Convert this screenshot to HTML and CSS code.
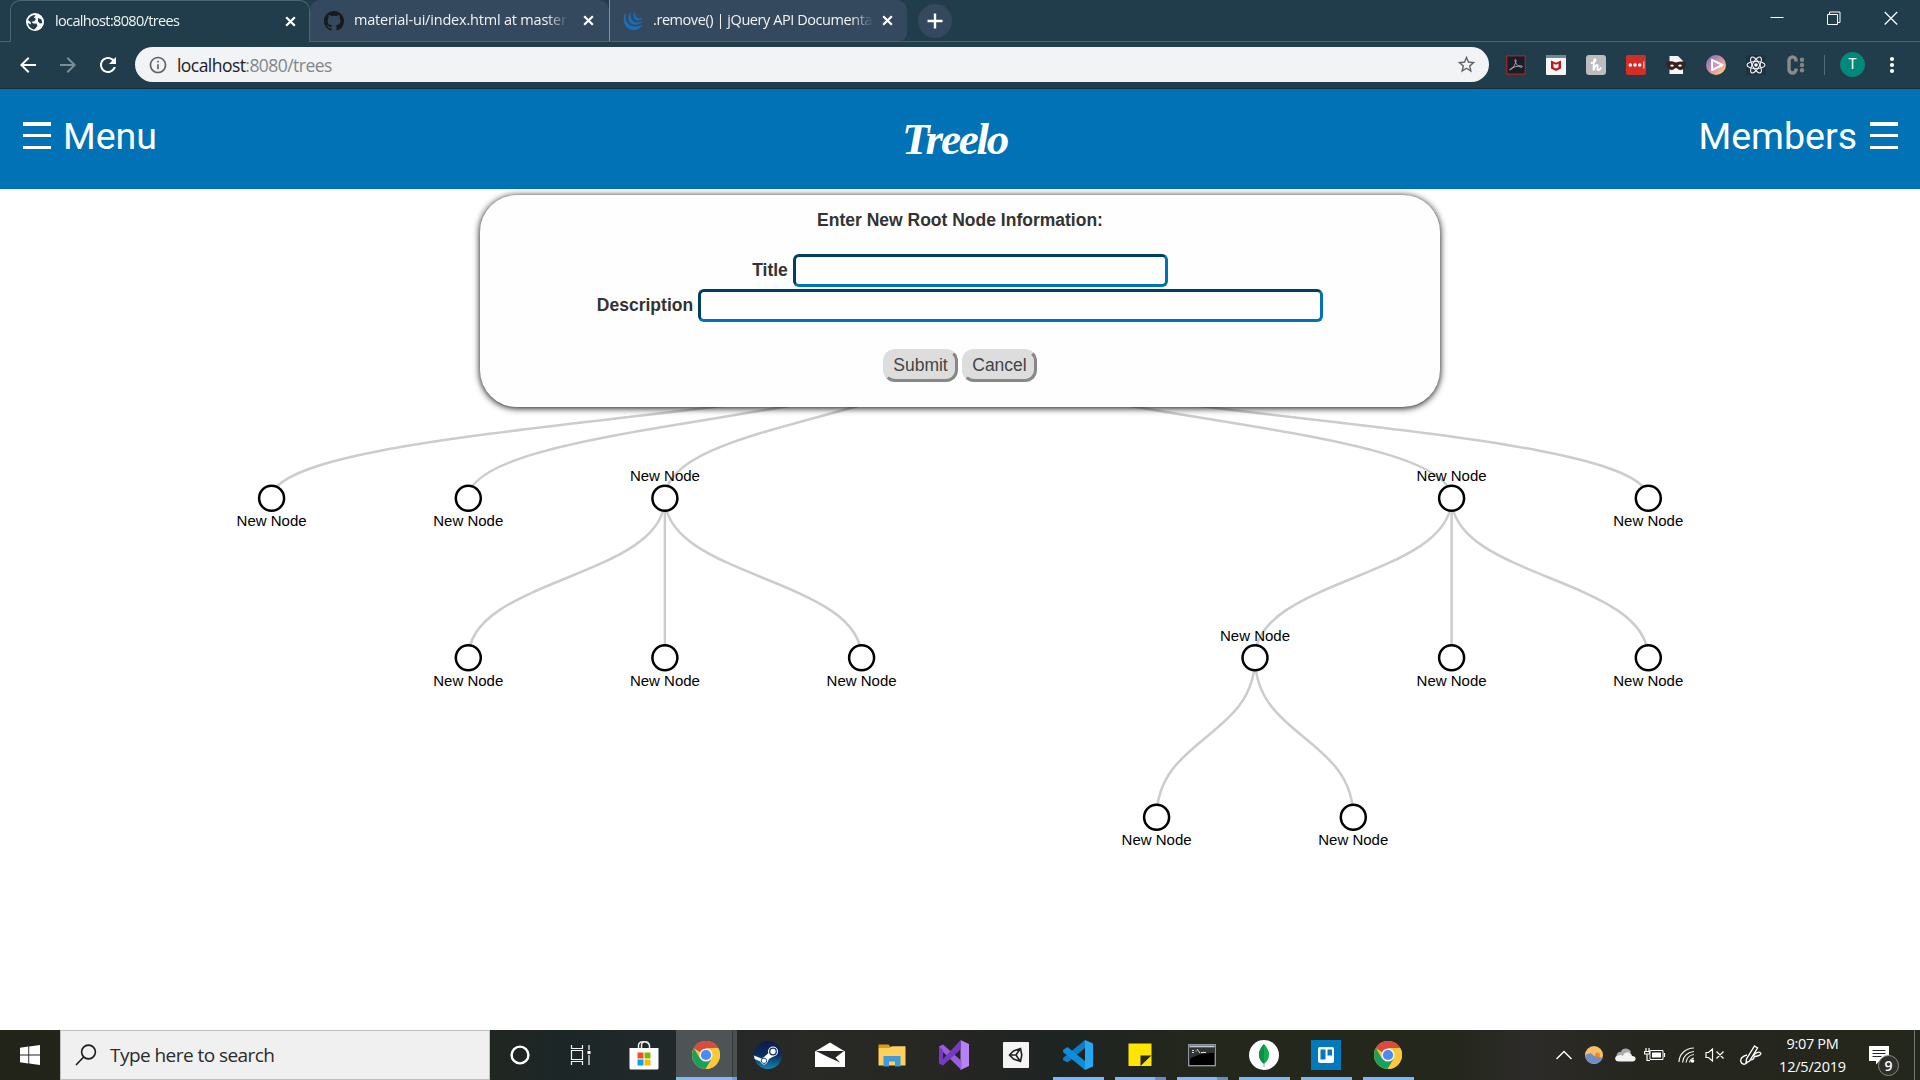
FILE: index.html
```html
<!DOCTYPE html>
<html lang="en">
<head>
<meta charset="utf-8">
<title>localhost:8080/trees</title>
<link rel="stylesheet" href="styles.css">
</head>
<body>
<svg class="defs" width="0" height="0" aria-hidden="true">
  <defs>
    <symbol id="close" viewBox="0 0 12 12"><path d="M2 2l8 8M10 2l-8 8" fill="none" stroke="#fff" stroke-width="2"/></symbol>
    <symbol id="chrome" viewBox="0 0 28 28">
      <circle cx="14" cy="14" r="14" fill="#fcc83c"/>
      <path d="M14 14L1.900 7A14 14 0 0 1 26.100 7z" fill="#db4a3f"/>
      <path d="M14 7h12.100A14 14 0 0 0 1.900 7l6 4z" fill="#db4a3f"/>
      <path d="M1.900 7A14 14 0 0 0 13.600 28l6.400-10.500L8 17.600z" fill="#1a9f5d"/>
      <path d="M26.100 7H14l6 10.500L13.600 28A14 14 0 0 0 26.100 7z" fill="#fcc83c"/>
      <circle cx="14" cy="14" r="6.600" fill="#f1f1f1"/>
      <circle cx="14" cy="14" r="5.100" fill="#4a8af4"/>
    </symbol>
  </defs>
</svg>

<div class="tabstrip">
  <div class="tab tab-active">
    <svg class="favicon" viewBox="0 0 18 18"><circle cx="9" cy="9" r="9" fill="#fff"/><path d="M2 7c1.500-3.500 4-5 7.500-5L8 4.500 10 6 8 8.500H5.500L7 10.500h3.500l1 2.500-3 3.500C5 16 2 13 2 10l3 1.500L4.500 9zM12 5l3.500 1.500.8 3.500-2.300.5-2-2z" fill="#213c4a"/></svg>
    <span class="tab-title title-one">localhost:8080/trees</span>
    <svg class="tab-close"><use href="#close"/></svg>
  </div>
  <div class="tab">
    <svg class="favicon github" viewBox="0 0 16 16"><path fill="#17191c" d="M8 0C3.580 0 0 3.580 0 8c0 3.540 2.290 6.530 5.470 7.590.4.070.55-.17.55-.38 0-.19-.01-.82-.01-1.490-2.010.37-2.530-.49-2.690-.94-.09-.23-.48-.94-.82-1.130-.28-.15-.68-.52-.01-.53.63-.01 1.080.58 1.230.82.72 1.210 1.870.87 2.330.66.07-.52.28-.87.51-1.070-1.780-.2-3.640-.89-3.640-3.950 0-.87.31-1.590.82-2.150-.08-.2-.36-1.020.08-2.120 0 0 .67-.21 2.200.82.64-.18 1.320-.27 2-.27s1.360.09 2 .27c1.530-1.040 2.200-.82 2.200-.82.44 1.100.16 1.920.08 2.120.51.56.82 1.270.82 2.150 0 3.070-1.870 3.750-3.650 3.950.29.25.54.73.54 1.480 0 1.070-.01 1.930-.01 2.200 0 .21.15.46.55.38A8.010 8.010 0 0 0 16 8c0-4.420-3.580-8-8-8z"/></svg>
    <span class="tab-title title-two">material-ui/index.html at master · </span>
    <svg class="tab-close"><use href="#close"/></svg>
  </div>
  <div class="tab tab-last">
    <svg class="favicon github" viewBox="0 0 20 20" fill="none" stroke="#1b6fb5" stroke-linecap="round"><path d="M2.500 3C-1 9 2 18 10 18.500c4 .2 7-1.500 9-4C14 17 8 16.500 5 13 2 9.500 1.500 6 2.500 3z" stroke-width="1" fill="#1b6fb5"/><path d="M7 2C4.500 7 6 13 11.500 13.500c3 .2 5.500-1 7-2.500C14 12.500 11 12 9 9.500 7 7 6.500 4.500 7 2z" stroke-width=".8" fill="#1b6fb5"/><path d="M11.500 1C10 5 11 8.500 14 9c2 .2 3.500-.3 5-1.500C16 8 14 7.500 12.800 5.500 11.500 3.500 11.200 2.300 11.500 1z" stroke-width=".6" fill="#1b6fb5"/></svg>
    <span class="tab-title title-three">.remove() | jQuery API Documentation</span>
    <svg class="tab-close"><use href="#close"/></svg>
  </div>
  <div class="new-tab"><svg width="16" height="16"><path d="M8 .5v15M.5 8h15" stroke="#fff" stroke-width="2.400"/></svg></div>
  <div class="window-controls">
    <svg viewBox="0 0 14 14"><path d="M.5 6.500h13" stroke="#fff"/></svg>
    <svg viewBox="0 0 14 14" fill="none" stroke="#fff"><path d="M.5 3.500h10v10h-10zM2.500 3.500v-2.500h10.500v10.500h-2.500"/></svg>
    <svg viewBox="0 0 14 14"><path d="M.7 1l12.500 12.500M13.200 1L.7 13.500" stroke="#fff" stroke-width="1.200"/></svg>
  </div>
</div>

<div class="toolbar">
  <div class="nav-buttons">
    <svg viewBox="0 0 24 24"><path fill="#fff" d="M20 11H7.830l5.590-5.590L12 4l-8 8 8 8 1.410-1.410L7.830 13H20v-2z"/></svg>
    <svg viewBox="0 0 24 24"><path fill="#7e8d95" d="M12 4l-1.410 1.410L16.170 11H4v2h12.170l-5.580 5.590L12 20l8-8z"/></svg>
    <svg viewBox="0 0 24 24"><path fill="#fff" d="M17.650 6.350C16.200 4.900 14.210 4 12 4c-4.420 0-7.990 3.580-7.990 8s3.570 8 7.990 8c3.730 0 6.840-2.550 7.730-6h-2.080c-.82 2.330-3.040 4-5.650 4-3.310 0-6-2.690-6-6s2.690-6 6-6c1.660 0 3.140.69 4.220 1.780L13 11h7V4l-2.350 2.350z"/></svg>
  </div>
  <div class="omnibox">
    <svg class="info" viewBox="0 0 24 24"><path fill="#5f6368" d="M11 17h2v-6h-2v6zm1-15C6.480 2 2 6.480 2 12s4.480 10 10 10 10-4.480 10-10S17.520 2 12 2zm0 18c-4.410 0-8-3.590-8-8s3.590-8 8-8 8 3.590 8 8-3.590 8-8 8zM11 9h2V7h-2v2z"/></svg>
    <span class="url">localhost<span class="url-path">:8080/trees</span></span>
    <svg class="star" viewBox="0 0 24 24"><path fill="#5f6368" d="M22 9.240l-7.190-.62L12 2 9.190 8.630 2 9.240l5.460 4.730L5.820 21 12 17.270 18.180 21l-1.630-7.030L22 9.240zM12 15.400l-3.760 2.270 1-4.280-3.320-2.880 4.380-.38L12 6.100l1.710 4.040 4.380.38-3.320 2.880 1 4.280L12 15.400z"/></svg>
  </div>
  <div class="extensions">
    <svg viewBox="0 0 20 20"><rect x=".7" y=".7" width="18.600" height="18.600" rx="1" fill="#1a1c28" stroke="#8a2a2c" stroke-width="1.400"/><path d="M4 15c2-.5 5-4.500 6-9 .3-2-1.500-2-1-.2 1 4 4.500 6.700 7 6.400.8-.5.3-1.600-1.500-1.400-3 .1-7.500 1.200-10 3-1 .8-1 1.300-.5 1.200z" fill="none" stroke="#a9adb5" stroke-width="1"/></svg>
    <svg viewBox="0 0 20 20"><rect width="20" height="20" rx="1" fill="#f6f7f8"/><rect width="20" height="3" fill="#6c8796"/><path d="M5 5.500l5 2.200 5-2.200v8l-5 2.500-5-2.500zM7.500 8.500v3.700l2.500 1.300 2.500-1.300V8.500L10 9.800z" fill="#c01818" fill-rule="evenodd"/></svg>
    <svg viewBox="0 0 20 20"><rect width="20" height="20" rx="3" fill="#bdbdbd"/><path d="M5.500 8C8 8 10 6 9.500 4.700 8.500 3.500 7.800 5 7.800 7L7.500 15.500c1-3.500 2.200-5.500 3.500-5.500 2 0-1 5 1.200 5 1 0 2-1 2.500-2" fill="none" stroke="#fff" stroke-width="1.800" stroke-linecap="round"/></svg>
    <svg viewBox="0 0 20 20"><rect width="20" height="20" rx="2" fill="#d32d27"/><g fill="#fff"><circle cx="4.300" cy="10" r="1.700"/><circle cx="9" cy="10" r="1.700"/><circle cx="13.700" cy="10" r="1.700"/><path d="M17.300 6.500h1v7h-1z"/></g></svg>
    <svg viewBox="0 0 20 20"><path d="M3.500 1H12l5 5v13H3.500z" fill="#f5f5f5"/><path d="M.5 7c3-1.300 6-.7 9.500.6C13 6.500 16 6 19.500 7c.5 4-1 8-5 8-2.500 0-3-2-4.500-2s-2 2-4.500 2C2 15 0 11 .5 7z" fill="#3b2020"/><path d="M4 10.500c1.500-1.500 3-1 4 .5-1.500 1-3 1-4-.5zM12 11c1-1.500 2.500-2 4-.5-1 1.500-2.500 1.500-4 .5z" fill="#fff"/></svg>
    <svg viewBox="0 0 20 20"><defs><linearGradient id="play" x1="0" x2=".9" y1=".1" y2="1"><stop offset="0" stop-color="#7475b8"/><stop offset=".5" stop-color="#d78fa8"/><stop offset="1" stop-color="#ffd580"/></linearGradient></defs><circle cx="10" cy="10" r="10" fill="url(#play)"/><path d="M6 4.800v10.400L16.500 10z" fill="#c39cbf" stroke="#fff" stroke-width="2" stroke-linejoin="round"/></svg>
    <svg viewBox="0 0 20 20"><rect width="20" height="20" fill="#1e333f"/><g fill="none" stroke="#f2f2f2" stroke-width="1.100"><ellipse cx="10" cy="10" rx="9" ry="3.500"/><ellipse cx="10" cy="10" rx="9" ry="3.500" transform="rotate(60 10 10)"/><ellipse cx="10" cy="10" rx="9" ry="3.500" transform="rotate(120 10 10)"/></g><circle cx="10" cy="10" r="1.800" fill="#fff"/></svg>
    <svg viewBox="0 0 20 20"><path d="M10 6.500V5.500a3.500 3.500 0 0 0-7 0v9a3.500 3.500 0 0 0 7 0v-1" fill="none" stroke="#8a8a8a" stroke-width="3.400"/><g fill="#858585"><circle cx="16" cy="4.800" r="2.200"/><circle cx="16" cy="10" r="2.200"/><circle cx="16" cy="15.200" r="2.200"/></g></svg>
  </div>
  <div class="divider"></div>
  <div class="avatar">T</div>
  <svg class="more" viewBox="0 0 6 18"><g fill="#fff"><circle cx="3" cy="3" r="2.100"/><circle cx="3" cy="9" r="2.100"/><circle cx="3" cy="15" r="2.100"/></g></svg>
</div>

<header class="app-header">
  <div class="header-link"><span class="bars"><i></i><i></i><i></i></span><span class="menu-label">Menu</span></div>
  <div class="brand"><span class="brand-name">Treelo</span></div>
  <div class="header-link header-right"><span class="members-label">Members</span><span class="bars"><i></i><i></i><i></i></span></div>
</header>

<main class="canvas">
  <svg class="tree" viewBox="0 189 1920 841">
    <g class="links">
      <path d="M960 338.800C960 418.500 271.600 418.500 271.600 498.300"/>
      <path d="M960 338.800C960 418.500 468.300 418.500 468.300 498.300"/>
      <path d="M960 338.800C960 418.500 664.900 418.500 664.900 498.300"/>
      <path d="M960 338.800C960 418.500 1451.600 418.500 1451.600 498.300"/>
      <path d="M960 338.800C960 418.500 1648.300 418.500 1648.300 498.300"/>
      <path d="M664.900 498.300C664.900 578 468.300 578 468.300 657.800"/>
      <path d="M664.900 498.300V657.800"/>
      <path d="M664.900 498.300C664.900 578 861.600 578 861.600 657.800"/>
      <path d="M1451.600 498.300C1451.600 578 1255 578 1255 657.800"/>
      <path d="M1451.600 498.300V657.800"/>
      <path d="M1451.600 498.300C1451.600 578 1648.300 578 1648.300 657.800"/>
      <path d="M1255 657.800C1255 737.500 1156.600 737.500 1156.600 817.300"/>
      <path d="M1255 657.800C1255 737.500 1353.300 737.500 1353.300 817.300"/>
    </g>
    <g class="nodes">
      <circle cx="271.600" cy="498.300" r="12.500"/><text x="271.600" y="526">New Node</text>
      <circle cx="468.300" cy="498.300" r="12.500"/><text x="468.300" y="526">New Node</text>
      <circle cx="664.900" cy="498.300" r="12.500"/><text x="664.900" y="481">New Node</text>
      <circle cx="1451.600" cy="498.300" r="12.500"/><text x="1451.600" y="481">New Node</text>
      <circle cx="1648.300" cy="498.300" r="12.500"/><text x="1648.300" y="526">New Node</text>
      <circle cx="468.300" cy="657.800" r="12.500"/><text x="468.300" y="686">New Node</text>
      <circle cx="664.900" cy="657.800" r="12.500"/><text x="664.900" y="686">New Node</text>
      <circle cx="861.600" cy="657.800" r="12.500"/><text x="861.600" y="686">New Node</text>
      <circle cx="1255" cy="657.800" r="12.500"/><text x="1255" y="641">New Node</text>
      <circle cx="1451.600" cy="657.800" r="12.500"/><text x="1451.600" y="686">New Node</text>
      <circle cx="1648.300" cy="657.800" r="12.500"/><text x="1648.300" y="686">New Node</text>
      <circle cx="1156.600" cy="817.300" r="12.500"/><text x="1156.600" y="845">New Node</text>
      <circle cx="1353.300" cy="817.300" r="12.500"/><text x="1353.300" y="845">New Node</text>
    </g>
  </svg>
  <form class="dialog">
    <div class="dialog-heading">Enter New Root Node Information:</div>
    <div class="field"><label for="title">Title</label><input class="input-title" id="title" type="text"></div>
    <div class="field"><label for="desc">Description</label><input class="input-desc" id="desc" type="text"></div>
    <div class="actions"><button type="button">Submit</button><button type="button">Cancel</button></div>
  </form>
</main>

<footer class="taskbar">
  <div class="start"><svg width="20" height="20" viewBox="0 0 20 20"><path fill="#fff" d="M0 2.800l8.300-1.200v8H0zM9.200 1.400L20 0v9.600H9.200zM0 10.400h8.300v8L0 17.300zM9.200 10.400H20V20L9.200 18.600z"/></svg></div>
  <div class="search"><svg width="22" height="22" viewBox="0 0 22 22" fill="none" stroke="#1a1a1a" stroke-width="1.600"><circle cx="13.500" cy="8" r="6.900"/><path d="M8.700 13L1 21"/></svg><span class="search-text">Type here to search</span></div>
  <div class="apps">
    <div class="app"><svg width="20" height="20"><circle cx="10" cy="10" r="8.400" fill="none" stroke="#fff" stroke-width="2.400"/></svg></div>
    <div class="app"><svg class="taskview" width="22" height="20" fill="none" stroke="#f4f4f4" stroke-width="1.200"><path d="M1.500 0v3.500h11V0M1.500 5.500h11v9h-11zM1.500 20v-3.500h11V20M19 0v5M19 10v10"/><path d="M17.500 6h3v3h-3z" fill="#fff" stroke="none"/></svg></div>
    <div class="app"><svg width="30" height="30"><path d="M9.500 9V5.500c0-5 9-5 11 0V9M12.500 9V5.500c0-5 7-5 8 0" fill="none" stroke="#e8e8e8" stroke-width="1.500"/><path d="M.5 8h29v20a1.500 1.500 0 0 1-1.500 1.500H2A1.500 1.500 0 0 1 .5 28z" fill="#fff"/><path d="M8.500 12.500h6v6h-6z" fill="#f25022"/><path d="M15.500 12.500h6v6h-6z" fill="#7fba00"/><path d="M8.500 19.500h6v6h-6z" fill="#00a4ef"/><path d="M15.500 19.500h6v6h-6z" fill="#ffb900"/></svg></div>
    <div class="app app-current"><svg width="28" height="28"><use href="#chrome"/></svg></div>
    <div class="app"><svg width="28" height="28"><defs><linearGradient id="steam" x2="0" y2="1"><stop offset="0" stop-color="#0d1b4a"/><stop offset=".5" stop-color="#0b2c5f"/><stop offset="1" stop-color="#1387b8"/></linearGradient></defs><circle cx="14" cy="14" r="14" fill="url(#steam)"/><path d="M0 14.500l8 3.300 6-5.300 5-2 2 4-6 3.500-2 4c-3 3-6 1-6.500-1.500L.6 18z" fill="#fff"/><circle cx="19" cy="10.500" r="5" fill="#fff"/><circle cx="19" cy="10.500" r="3.300" fill="#fff" stroke="#14305f" stroke-width="1.300"/><circle cx="10" cy="19.800" r="2.700" fill="none" stroke="#29508a"/></svg></div>
    <div class="app"><svg width="30" height="26"><path d="M0 9.500L15 .5l15 9V25H0z" fill="#fff"/><path d="M1 9h28l-8.500 6.500 4.500 5L13 15z" fill="#262624"/></svg></div>
    <div class="app"><svg width="28" height="24"><path d="M.5 1.500h10l3 3.500h-13z" fill="#e09a0b"/><path d="M.5 5h11l2.500-1.700h13.500V22.500H.5z" fill="#ffd15c"/><path d="M5.500 23.500V13h17v10.500h-5.500v-5h-6v5z" fill="#3f9bdc"/></svg></div>
    <div class="app"><svg width="30" height="30"><path d="M21.500 0L30 4v22l-8.500 4z" fill="#b583f3"/><path d="M0 6.500l4-2L22.500 21v9L0 8z" fill="#9a60dc"/><path d="M0 6.500l4 3.500v10.500L0 23.500zM21.500 0v9.500L4 25.500l-4-2z" fill="#743bc0"/></svg></div>
    <div class="app"><svg width="26" height="26"><rect width="26" height="26" rx="1" fill="#f4f4f4"/><path d="M6.500 13l4-4 7-2.500 1.300 6.500-1.300 6.500-7-2.500zM7 13h6l4-6M13 13l4 6" fill="none" stroke="#222" stroke-width="1.600"/></svg></div>
    <div class="app running"><svg width="30" height="30"><path d="M22 0l8 3.500v23L22 30z" fill="#27a9f2"/><path d="M22 0v8L4.500 22.500 0 20v-2z" fill="#0b7dc9"/><path d="M0 10l4.500-3L22 21v9L0 12z" fill="#0c8edc"/></svg></div>
    <div class="app running multi"><svg width="24" height="24"><path d="M.5.500h23v12l-11 10.500H.5z" fill="#ffe500"/><path d="M12.500 23V12.500h11L12.500 23z" fill="#26271c"/><path d="M23.500 12.500V23h-11z" fill="#ffe500"/></svg></div>
    <div class="app running multi"><svg width="28" height="23"><rect x=".7" y=".7" width="26.600" height="21" fill="#000" stroke="#8d959f" stroke-width="1.400"/><path d="M1.500 2.500h25" stroke="#c1c9d3" stroke-width="2"/><path d="M1.500 4h25v5C16 9 8 11 1.500 15z" fill="#333"/><path d="M4 6.500h2M4 8.500h2M8 6.500v1M9 5l3 4M13 8.500h5" stroke="#ddd"/></svg></div>
    <div class="app running"><svg width="30" height="30"><circle cx="15" cy="15" r="15" fill="#fff"/><path d="M15 4c7 7 6.500 15 0 20-6.500-5-7-13 0-20z" fill="#13aa52"/><path d="M15 4c-7 7-6.500 15 0 20z" fill="#0e8e46"/><path d="M15 23v4" stroke="#8ba697"/></svg></div>
    <div class="app running"><svg width="30" height="30"><path d="M0 0h30v30H0z" fill="#0079bf"/><rect x="7" y="7" width="16" height="16" rx="2" fill="#fff"/><path d="M9.500 9.500h5v10h-5zM16.500 9.500h4.500v6h-4.500z" fill="#0079bf"/></svg></div>
    <div class="app running"><svg width="28" height="28"><use href="#chrome"/></svg></div>
  </div>
  <div class="tray">
    <svg class="w-chevron" width="18" height="10"><path d="M1.500 9L9 1.500 16.500 9" fill="none" stroke="#fff" stroke-width="1.400"/></svg>
    <svg class="w-weather" width="18" height="18"><circle cx="9" cy="9" r="9" fill="#f9be68"/><circle cx="12.500" cy="9" r="2.500" fill="#f08c20"/><path d="M0 10c3-3.500 6-3.500 8-1 2 2.500 5 1 9.500 3C15 20 2 20 0 10z" fill="#6f8fc4"/></svg>
    <svg class="w-cloud" width="22" height="14"><path d="M3 10C1 5 6 3 7 4c1-5 9-4 10 0l-5 6z" fill="#aaa"/><path d="M5 13.500c-5 0-5-6-.5-6 1.500-1 3-.5 4.500.5 1-5 8-5 9 0 5 0 4.500 5.500.5 5.500z" fill="#f3f3f3"/></svg>
    <svg class="w-battery" width="22" height="14" fill="none" stroke="#fff"><path d="M6 2.500h13v9H6z"/><path d="M8 4.500h9v5H8z" fill="#fff" stroke="none"/><path d="M20.500 5v4M2 0v3M5 0v3M.5 3.500h5v2.500h-5zM3 6v6.500h3" stroke-width="1.200"/></svg>
    <svg class="w-wifi" width="18" height="18" fill="none" stroke="#eee" stroke-width="1.200"><path d="M1 16C1 8 8 2 16 2M4.500 16.500C5 10.500 9.500 6 16 5.500M8 16.500c.5-4 3.500-7.500 8-8"/><path d="M11.500 16.500c.5-2.500 2-4 4.500-4.500"/><circle cx="14.500" cy="15" r="1.800" fill="#fff" stroke="none"/></svg>
    <svg class="w-mute" width="20" height="14" fill="none" stroke="#fff" stroke-width="1.200"><path d="M1 4.500h2.500L7.500 1v12L3.500 9.500H1zM11.500 3.500l7 7M18.500 3.500l-7 7"/></svg>
    <svg class="w-pen" width="22" height="22" fill="none" stroke="#fff" stroke-width="1.400"><path d="M14.500 2l3 2L9.500 17l-3.500 2 .5-4zM7 11c-5 1-7 4-6 7s5 3 7-.5M13 12c2-3 6-5 7.500-3s-4 3.500-6 3.500c-1 3-3 4-4 3"/></svg>
    <div class="clock"><span class="time">9:07 PM</span><span class="date">12/5/2019</span></div>
    <div class="notice"><svg width="20" height="19"><path d="M0 0h20v15h-9.500L7 18.500V15H0z" fill="#fff"/><path d="M3.500 4.500h13M3.500 7.500h13M3.500 10.500h9" stroke="#2a2a25" stroke-width="1.200"/></svg><span class="badge">9</span></div>
    <div class="peek"></div>
  </div>
</footer>
</body>
</html>
```
FILE: styles.css
```css
* { box-sizing: border-box; }

body {
  margin: 0;
  width: 1920px;
  height: 1080px;
  overflow: hidden;
  display: flex;
  flex-direction: column;
  background: #fff;
  font-family: "Liberation Sans", Arial, sans-serif;
}

svg { flex: none; display: block; }
.defs { position: absolute; }

/* Browser tabs */
.tabstrip {
  flex: none;
  height: 42px;
  display: flex;
  padding-left: 10px;
  background: #213c4a;
  box-shadow: inset 0 -1px #4d6571;
}
.tab {
  width: 299px;
  height: 41px;
  display: flex;
  align-items: center;
  padding: 0 14px 0 14px;
  background: #35495e;
  color: #f1f3f4;
  border-radius: 10px 10px 0 0;
  font-family: "Open Sans", sans-serif;
  font-size: 14.500px;
}
.tab-active {
  width: 300px;
  height: 42px;
  padding: 0 12px 0 15px;
  background: #213c4a;
  border: 1px solid #4d6571;
  border-bottom: 0;
}
.tab-last { width: 298px; padding: 0 13px; border-left: 1px solid #8290a0; border-radius: 0 10px 8px 0; }
.favicon { width: 18px; height: 18px; }
.github { width: 20px; height: 20px; }
.tab-title {
  width: 214px;
  margin-left: 10px;
  padding-bottom: 2px;
  white-space: nowrap;
  overflow: hidden;
  mask-image: linear-gradient(90deg, #000 90%, transparent);
}
.title-one { margin-left: 11px; letter-spacing: -0.650px; }
.title-two { letter-spacing: -0.200px; }
.title-three { letter-spacing: -0.430px; width: 220px; }
.tab-close { width: 13px; height: 13px; margin-left: auto; }
.new-tab {
  width: 34px;
  height: 34px;
  margin: 4px 0 0 11px;
  display: flex;
  align-items: center;
  justify-content: center;
  background: #35495e;
  border-radius: 50%;
}
.window-controls {
  margin: 11px 22px 0 auto;
  display: flex;
  gap: 43px;
}
.window-controls svg { width: 14px; height: 14px; }

/* Address bar row */
.toolbar {
  flex: none;
  height: 47px;
  display: flex;
  align-items: center;
  padding: 0 8px 1px 7px;
  background: #213c4a;
  border-bottom: 1px solid #182b36;
}
.nav-buttons { display: flex; gap: 16px; padding: 0 15px 0 9px; }
.nav-buttons svg { width: 24px; height: 24px; }
.omnibox {
  flex: 1;
  height: 35px;
  display: flex;
  align-items: center;
  padding: 0 12px 0 13px;
  background: #f1f3f4;
  border-radius: 18px;
}
.info { width: 20px; height: 20px; }
.url {
  margin-left: 9px;
  color: #202124;
  font: 17.500px "Open Sans", sans-serif;
  letter-spacing: -0.550px;
}
.url-path { color: #80868b; }
.star { width: 21px; height: 21px; margin-left: auto; }
.extensions { display: flex; gap: 20px; padding: 0 11px 0 17px; }
.extensions svg { width: 20px; height: 20px; }
.divider { width: 1px; height: 20px; margin: 0 15px 0 7px; background: #536a76; }
.avatar {
  width: 25px;
  height: 25px;
  border-radius: 50%;
  background: #00897b;
  color: #fff;
  font: 14px/25px Roboto, sans-serif;
  text-align: center;
}
.more { width: 6px; height: 18px; margin: 0 17px 0 24px; }

/* Application header */
.app-header {
  flex: none;
  height: 100px;
  display: grid;
  grid-template-columns: 1fr 105px 1fr;
  padding: 0 22px 0 23px;
  background: #0072b5;
  color: #fff;
}
.header-link {
  display: flex;
  align-items: flex-start;
  padding-top: 33px;
  font: 37.500px/29px Roboto, sans-serif;
}
.header-right { justify-content: flex-end; }
.bars { width: 28px; height: 27px; display: flex; flex-direction: column; justify-content: space-between; }
.bars i { height: 3.500px; background: #fff; }
.menu-label { margin-left: 12px; }
.members-label { margin-right: 13px; }
.brand { padding-top: 27px; margin-left: -6px; white-space: nowrap; }
.brand-name {
  display: block;
  font: italic 700 45px/46px "Liberation Serif", serif;
  letter-spacing: -2.200px;
}

/* Tree canvas */
.canvas { flex: 1; position: relative; }
.tree { width: 1920px; height: 841px; }
.links path { fill: none; stroke: #ccc; stroke-width: 2.500px; }
.nodes circle { fill: #fff; stroke: #000; stroke-width: 2.500px; }
.nodes text { font-size: 15px; text-anchor: middle; fill: #000; }

/* New root dialog floating over the tree */
.dialog {
  position: absolute;
  left: 480px;
  top: 6px;
  width: 960px;
  height: 212px;
  padding: 15px 0 0;
  text-align: center;
  background: #fefefe;
  border-radius: 37px;
  box-shadow: 0 1px 7px #000;
  color: #333;
  font-size: 17.500px;
  font-weight: 700;
}
.dialog-heading { line-height: 21px; margin-bottom: 23px; }
.field {
  display: flex;
  justify-content: center;
  align-items: center;
  gap: 5px;
  margin-bottom: 2px;
}
.field input {
  height: 33px;
  padding: 0;
  background: #fff;
  border: 3px solid;
  border-color: #003f64 #0072b5 #0072b5 #003f64;
  border-radius: 6px;
}
.input-title { width: 375px; }
.input-desc { width: 625px; }
.actions { display: flex; justify-content: center; gap: 4px; margin-top: 27px; }
.actions button {
  width: 75px;
  height: 33px;
  padding: 0;
  background: #ddd;
  border: 3px solid;
  border-color: #ddd #888 #888 #ddd;
  border-radius: 12px;
  color: #444;
  font: 17.500px "Liberation Sans", sans-serif;
}

/* Taskbar */
.taskbar {
  flex: none;
  height: 50px;
  display: flex;
  color: #fff;
  background: linear-gradient(90deg, #22241a 0, #23261f 460px, #1d2627 560px, #20282a 640px, #292926 800px, #262623 940px, #1e2422 1060px, #24271c 1200px, #24271c 1450px, #2d2b29 1530px, #25261e 1640px, #24271c 1920px);
}
.start { width: 60px; display: flex; align-items: center; justify-content: center; }
.search {
  width: 430px;
  height: 50px;
  display: flex;
  align-items: center;
  padding-left: 14px;
  background: #f0f0f0;
  border: 1px solid #bebebe;
  color: #2b2b2b;
}
.search-text { margin: 0 0 1px 13px; font: 19px "Open Sans", sans-serif; letter-spacing: -0.550px; }
.apps { display: flex; margin-left: -1px; }
.app {
  width: 62px;
  height: 50px;
  display: flex;
  align-items: center;
  justify-content: center;
  background: linear-gradient(#76b9ff, #76b9ff) no-repeat 6px 47px / 0 3px;
}
.taskview { margin-right: 3px; }
.running { background-size: 51px 3px; }
.multi {
  background: linear-gradient(90deg, #80b9fb 40px, #5e8fc9 40px) no-repeat 6px 47px / 51px 3px;
}
.app-current {
  background:
    linear-gradient(90deg, #80b9fb 56px, #6ba0de 56px) no-repeat 1px 47px / 61px 3px,
    linear-gradient(90deg, #4e5355 56px, #35393b 56px, #35393b 57px, #4b4f51 57px) no-repeat 1px 0 / 61px 50px;
}
.tray { margin-left: auto; display: flex; align-items: center; }
.w-chevron { margin-right: 12px; }
.w-weather { margin-right: 11px; }
.w-cloud { margin-right: 8px; }
.w-battery { margin-right: 12px; }
.w-wifi { margin-right: 9px; }
.w-mute { margin-right: 15px; }
.w-pen { margin-right: 17px; }
.clock {
  width: 67px;
  display: flex;
  flex-direction: column;
  align-items: center;
  font: 14.500px/23px "Open Sans", sans-serif;
  white-space: nowrap;
}
.time { letter-spacing: -0.350px; }
.date { letter-spacing: -0.200px; }
.notice { position: relative; width: 20px; margin-left: 23px; }
.badge {
  position: absolute;
  left: 9px;
  top: 9px;
  width: 21px;
  height: 21px;
  border: 1px solid #8b8b88;
  border-radius: 50%;
  background: #2e2e2b;
  font: 600 14px/19px "Open Sans", sans-serif;
  text-align: center;
}
.peek { width: 1px; height: 50px; margin: 0 5px 0 25px; background: #777; }
```
